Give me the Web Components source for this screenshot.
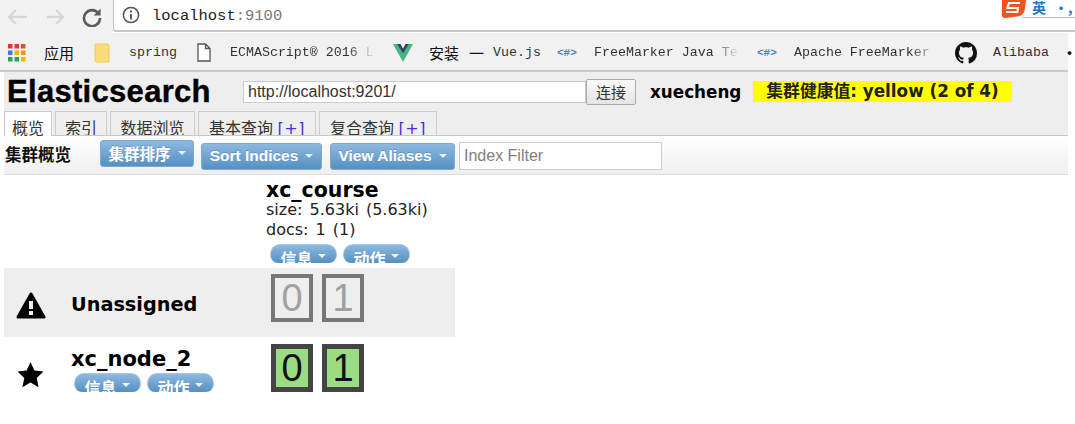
<!DOCTYPE html>
<html>
<head>
<meta charset="utf-8">
<style>
  html,body{margin:0;padding:0;background:#fff;height:424px;overflow:hidden}
  body{font-family:"DejaVu Sans","Noto Sans CJK SC",sans-serif;color:#000}
</style>
</head>
<body>
<browser-bar></browser-bar>
<bookmark-bar></bookmark-bar>
<es-header></es-header>
<es-tabs></es-tabs>
<es-toolbar></es-toolbar>
<cluster-view></cluster-view>
<script>
const cjk = '"Noto Sans CJK SC"'

class BrowserBar extends HTMLElement{
  constructor(){
    super()
    this.attachShadow({mode:'open'})
    this.shadowRoot.innerHTML = `
    <style>
      :host{display:flex;height:33px;background:#fff;position:relative}
      .nav{width:113px;height:33px;background:#f2f2f2;display:flex;align-items:center;padding-left:6px;gap:17px;box-sizing:border-box}
      .nav svg{display:block;flex:none}
      .omni{flex:1;height:32px;border-left:1px solid #c4c4c4;border-bottom:2px solid #c6c6c6;border-bottom-left-radius:3px;box-sizing:border-box;display:flex;align-items:center;padding-left:8px;gap:12px}
      .url{font:15.5px "Liberation Mono",monospace;color:#222;position:relative;top:1px}
      .url span{color:#777}
      .ime{position:absolute;left:1000px;top:0;width:75px;height:18px;display:flex;gap:5px;font:bold 14px/14px ${cjk},sans-serif;color:#1c78c8}
      .ime::after{content:'';position:absolute;left:22px;right:0;top:17px;height:1px;background:#bbb}
      .ime svg{flex:none}
      .ime b{font-weight:bold}
    </style>
    <div class="nav">
      <svg width="24" height="20" viewBox="0 0 24 20" fill="none" stroke="#d6d6d6" stroke-width="2.4"><path d="M21 10H3M10 3l-7 7 7 7"/></svg>
      <svg width="18" height="20" viewBox="0 0 18 20" fill="none" stroke="#d6d6d6" stroke-width="2.4"><path d="M0 10h16M9 3l7 7-7 7"/></svg>
      <svg width="20" height="20" viewBox="0 0 20 20" fill="none" stroke="#5c5c5c" stroke-width="2.6"><path d="M16.5 6.5A8 8 0 1 0 18 11"/><path d="M18.6 1.6v7h-7z" fill="#5c5c5c" stroke="none"/></svg>
    </div>
    <div class="omni">
      <svg width="18" height="18" viewBox="0 0 18 18" fill="none" stroke="#555" stroke-width="1.5"><circle cx="9" cy="9" r="7.6"/><path d="M9 8v5.4M9 4.6v1.8" stroke-width="1.9"/></svg>
      <div class="url">localhost<span>:9100</span></div>
    </div>
    <div class="ime">
      <svg width="27" height="18" viewBox="0 0 27 18"><path d="M2 0h24l-1 8c-.5 5-3 8-8 8.500L5 18c-2 0-3-1-3.200-3z" fill="#f0531f"/><path d="M20 3H9L7.500 8H18l-.6 4H6" fill="none" stroke="#fff" stroke-width="2.200"/></svg>
      <b>英</b><b style="margin-left:3px">•,</b>
    </div>`
  }
}

class BookmarkBar extends HTMLElement{
  constructor(){
    super()
    this.attachShadow({mode:'open'})
    const dots = ['#d93a30','#d93a30','#e04b3a','#3d7de0','#f5b400','#f59a00','#2f9e57','#2f9e57','#f5b400']
    const grid = dots.map((c,i)=>`<rect x="${(i%3)*6.5}" y="${Math.floor(i/3)*6.5}" width="4.500" height="4.500" fill="${c}"/>`).join('')
    this.shadowRoot.innerHTML = `
    <style>
      :host{display:block;width:1068px;height:39px;background:#f1f1f1;border-bottom:2px solid #c9c9c9;box-sizing:border-box}
      .row{display:flex;align-items:center;height:37px;padding-top:2px;box-sizing:border-box;position:relative;white-space:nowrap}
      .t{font:13.300px "Liberation Mono",monospace;color:#333;overflow:hidden;flex:none}
      .c{font:15px ${cjk},sans-serif;color:#111;flex:none}
      .hash{font:bold 11px "Liberation Mono",monospace;color:#4a7fd0;flex:none;width:22px}
      svg{flex:none;display:block}
      .fade{-webkit-mask-image:linear-gradient(to right,#000 80%,transparent);mask-image:linear-gradient(to right,#000 80%,transparent)}
    </style>
    <div class="row">
      <svg style="margin-left:8px" width="18" height="18" viewBox="0 0 18 18">${grid}</svg>
      <span class="c" style="margin-left:18px;width:31px">应用</span>
      <svg style="margin-left:19px" width="16" height="20" viewBox="0 0 16 20"><path d="M1 1h13l1 1v17H2l-1-1z" fill="#fbdc7c" stroke="#efc95c"/></svg>
      <span class="t" style="margin-left:19px;width:48px">spring</span>
      <svg style="margin-left:20px" width="14" height="19" viewBox="0 0 14 19" fill="#fff" stroke="#555" stroke-width="1.300"><path d="M1 1h7.500L13 5.500V18H1zM8.500 1v4.500H13"/></svg>
      <span class="t fade" style="margin-left:19px;width:146px">ECMAScript® 2016 L</span>
      <svg style="margin-left:17px" width="20" height="18" viewBox="0 0 20 18"><path d="M0 0h4l6 10L16 0h4L10 18z" fill="#41b883"/><path d="M4 0h3.500L10 4.500 12.500 0H16l-6 10z" fill="#34495e"/></svg>
      <span class="c" style="margin-left:16px;width:32px">安装</span>
      <span class="c" style="margin-left:8px;width:15px">一</span>
      <span class="t" style="margin-left:9px;width:48px">Vue.js</span>
      <span class="hash" style="margin-left:16px">&lt;#&gt;</span>
      <span class="t fade" style="margin-left:15px;width:146px">FreeMarker Java Te</span>
      <span class="hash" style="margin-left:17px">&lt;#&gt;</span>
      <span class="t fade" style="margin-left:15px;width:145px">Apache FreeMarker</span>
      <svg style="margin-left:16px" width="22" height="22" viewBox="0 0 16 16"><path fill="#111" d="M8 0C3.580 0 0 3.580 0 8c0 3.540 2.290 6.530 5.470 7.590.4.070.55-.17.55-.38 0-.19-.01-.82-.01-1.490-2.010.37-2.530-.49-2.690-.94-.09-.23-.48-.94-.82-1.130-.28-.15-.68-.52-.01-.53.630-.01 1.080.58 1.230.82.720 1.210 1.870.87 2.330.66.070-.52.280-.87.510-1.070-1.780-.2-3.640-.89-3.640-3.950 0-.87.310-1.590.82-2.150-.08-.2-.36-1.020.08-2.120 0 0 .67-.21 2.200.82.640-.18 1.320-.27 2-.27s1.360.09 2 .27c1.530-1.040 2.200-.82 2.200-.82.440 1.100.16 1.920.08 2.120.51.560.82 1.270.82 2.150 0 3.070-1.870 3.750-3.650 3.950.29.250.54.730.54 1.480 0 1.070-.01 1.930-.01 2.200 0 .21.150.46.550.38A8.010 8.010 0 0 0 16 8c0-4.420-3.580-8-8-8z"/></svg>
      <span class="t" style="margin-left:16px;width:56px">Alibaba</span>
      <span class="c" style="margin-left:13px;font-weight:bold">·</span>
    </div>`
  }
}

class EsHeader extends HTMLElement{
  constructor(){
    super()
    this.attachShadow({mode:'open'})
    this.shadowRoot.innerHTML = `
    <style>
      :host{display:flex;align-items:center;margin-left:4px;width:1064px;height:39px;background:#eee;box-sizing:border-box;padding-left:3px;white-space:nowrap}
      h1{margin:0;font:bold 31px "Liberation Sans",sans-serif;letter-spacing:.3px;-webkit-text-stroke:.4px #000;width:236px;flex:none}
      input{box-sizing:border-box;width:343px;height:22px;margin:0;border:1px solid #ccc;background:#fff;padding:0 4px;font:16px "Liberation Sans",sans-serif;color:#333;flex:none;outline:none}
      button{box-sizing:border-box;width:50px;height:26px;margin:0;border:1px solid #aaa;border-radius:2px;background:linear-gradient(#fafafa,#e4e4e4);font:15px ${cjk},sans-serif;color:#333;padding:0;flex:none}
      .name{font:bold 16.800px "DejaVu Sans",sans-serif;margin-left:14px;width:103px;flex:none}
      .health{background:#ff0;width:259px;height:21px;text-align:center;font:bold 16.800px/21px "DejaVu Sans",${cjk},sans-serif;color:#222;flex:none;box-sizing:border-box;overflow:hidden}
    </style>
    <h1>Elasticsearch</h1>
    <input value="http://localhost:9201/">
    <button>连接</button>
    <span class="name">xuecheng</span>
    <span class="health">集群健康值: yellow (2 of 4)</span>`
  }
}

class EsTabs extends HTMLElement{
  constructor(){
    super()
    this.attachShadow({mode:'open'})
    this.shadowRoot.innerHTML = `
    <style>
      :host{display:flex;margin-left:4px;width:1064px;height:25px;background:#eee;box-sizing:border-box;border-bottom:1px solid #c8c8c8;gap:3px}
      div{box-sizing:border-box;height:24px;border:1px solid #ccc;border-bottom:0;font:16px/30px ${cjk},sans-serif;color:#333;text-align:center;white-space:nowrap;overflow:hidden;flex:none}
      .on{background:#fff;height:25px}
      b{font:16px "DejaVu Sans",sans-serif;color:#4a2de0;letter-spacing:.5px;margin-left:1px}
    </style>
    <div class="on" style="width:48px">概览</div>
    <div style="width:52px">索引</div>
    <div style="width:85px">数据浏览</div>
    <div style="width:118px">基本查询 <b>[+]</b></div>
    <div style="width:118px">复合查询 <b>[+]</b></div>`
  }
}

class EsButton extends HTMLElement{
  constructor(){
    super()
    this.attachShadow({mode:'open'})
    this.shadowRoot.innerHTML = `
    <style>
      :host{display:inline-flex;align-items:center;justify-content:center;gap:7px;box-sizing:border-box;height:27px;border:1px solid #7fa9cf;border-radius:3px;background:linear-gradient(#8db9e0,#5590c2);color:#fff;font:bold 15.5px "Liberation Sans",${cjk},sans-serif;text-shadow:0 -1px 0 rgba(0,0,0,.15);flex:none;white-space:nowrap}
      i{width:0;height:0;border:4px solid transparent;border-top-color:#e8f0f6;border-bottom:0}
    </style>
    <slot></slot><i></i>`
  }
}

class EsToolbar extends HTMLElement{
  constructor(){
    super()
    this.attachShadow({mode:'open'})
    this.shadowRoot.innerHTML = `
    <style>
      :host{display:flex;align-items:center;margin-left:4px;width:1064px;height:39px;box-sizing:border-box;background:linear-gradient(#fff,#efefef);border-bottom:1px solid #ddd;padding-left:1px;white-space:nowrap}
      h2{margin:0;font:bold 16.500px ${cjk},sans-serif;color:#111;width:95px;flex:none;position:relative;top:-1px}
      input{box-sizing:border-box;width:203px;height:28px;margin:2px 0 0 4px;border:1px solid #ccc;background:#fff;padding:0 4px;font:16px "Liberation Sans",sans-serif;outline:none;flex:none}
      input::placeholder{color:#808080}
      .a{width:94px;margin:-4px 0 0}
      .b{width:121px;margin:2px 0 0 7px}
      .c{width:125px;margin:2px 0 0 8px}
    </style>
    <h2>集群概览</h2>
    <es-button class="a">集群排序</es-button>
    <es-button class="b">Sort Indices</es-button>
    <es-button class="c">View Aliases</es-button>
    <input placeholder="Index Filter">`
  }
}

class PillMenu extends HTMLElement{
  constructor(){
    super()
    this.attachShadow({mode:'open'})
    this.shadowRoot.innerHTML = `
    <style>
      :host{display:block;box-sizing:border-box;width:67px;height:19px;overflow:hidden;border:1px solid #a9c6e2;border-bottom:0;border-radius:10px 10px 8px 8px;background:linear-gradient(#8db9e0,#5590c2);color:#fff;font:bold 16px/26px ${cjk},sans-serif;text-align:center;white-space:nowrap;position:relative;padding-right:14px}
      i{position:absolute;right:10px;top:9px;border:4px solid transparent;border-top-color:#eef4f9;border-bottom:0}
    </style>
    <slot></slot><i></i>`
  }
}

class ShardBox extends HTMLElement{
  constructor(){
    super()
    this.attachShadow({mode:'open'})
    this.shadowRoot.innerHTML = `
    <style>
      :host{display:flex;align-items:center;justify-content:center;box-sizing:border-box;height:48px;width:42px;border:5px solid #444;background:#9bdc82;font:38px "Liberation Sans",sans-serif;color:#111;flex:none}
      :host([unassigned]){border-color:#777;background:#eee;color:#a0a0a0;border-width:4px}
    </style>
    <slot></slot>`
  }
}

class ClusterView extends HTMLElement{
  constructor(){
    super()
    this.attachShadow({mode:'open'})
    this.shadowRoot.innerHTML = `
    <style>
      :host{display:block;margin-left:4px;width:451px;font-family:"DejaVu Sans",sans-serif;white-space:nowrap}
      .row{display:grid;grid-template-columns:67px 196px 1fr;align-items:start}
      .pills{display:flex;gap:6px}
      .top{height:93px}
      .info{grid-column:2/4;padding:5px 0 0 195px}
      .info h3{margin:0;font:bold 20.500px/20px "DejaVu Sans",sans-serif}
      .info p{margin:0;font:16px/19.500px "DejaVu Sans",sans-serif;color:#222;word-spacing:2px}
      .info p:first-of-type{margin-top:0}
      .info .pills{margin:5px 0 0 4px}
      .un{height:69px;background:#eee}
      .node{height:56px;margin-top:1px}
      .ico{display:flex;justify-content:center;padding-left:5px;width:48px;box-sizing:border-box}
      .ico svg{display:block}
      .shards{display:flex;gap:9px;padding-top:6px;margin-left:4px}
      .name{font:bold 19.300px "DejaVu Sans",sans-serif}
    </style>
    <div class="row top">
      <div></div>
      <div class="info">
        <h3>xc_course</h3>
        <p>size: 5.63ki (5.63ki)</p>
        <p>docs: 1 (1)</p>
        <div class="pills"><pill-menu>信息</pill-menu><pill-menu>动作</pill-menu></div>
      </div>
    </div>
    <div class="row un">
      <div class="ico" style="padding-top:24px"><svg width="30" height="27" viewBox="0 0 30 27"><path d="M15 2L28 25H2z" fill="#000" stroke="#000" stroke-width="3" stroke-linejoin="round"/><rect x="13" y="9" width="4" height="8" fill="#eee"/><rect x="13" y="19" width="4" height="4" fill="#eee"/></svg></div>
      <div class="name" style="padding-top:25px">Unassigned</div>
      <div class="shards"><shard-box unassigned>0</shard-box><shard-box unassigned>1</shard-box></div>
    </div>
    <div class="row node">
      <div class="ico" style="padding-top:24px"><svg width="27" height="26" viewBox="0 0 27 26"><path d="M13.500 0l3.900 8.600 9.100 1-6.800 6.300 1.900 9.400-8.100-4.700-8.100 4.700 1.900-9.400L.500 9.600l9.100-1z" fill="#000"/></svg></div>
      <div style="padding-top:11px">
        <div class="name" style="font-size:21px;line-height:21px">xc_node_2</div>
        <div class="pills" style="margin:3px 0 0 3px"><pill-menu>信息</pill-menu><pill-menu>动作</pill-menu></div>
      </div>
      <div class="shards"><shard-box>0</shard-box><shard-box>1</shard-box></div>
    </div>`
  }
}

customElements.define('browser-bar', BrowserBar)
customElements.define('bookmark-bar', BookmarkBar)
customElements.define('es-header', EsHeader)
customElements.define('es-tabs', EsTabs)
customElements.define('es-button', EsButton)
customElements.define('es-toolbar', EsToolbar)
customElements.define('pill-menu', PillMenu)
customElements.define('shard-box', ShardBox)
customElements.define('cluster-view', ClusterView)
</script>
</body>
</html>
